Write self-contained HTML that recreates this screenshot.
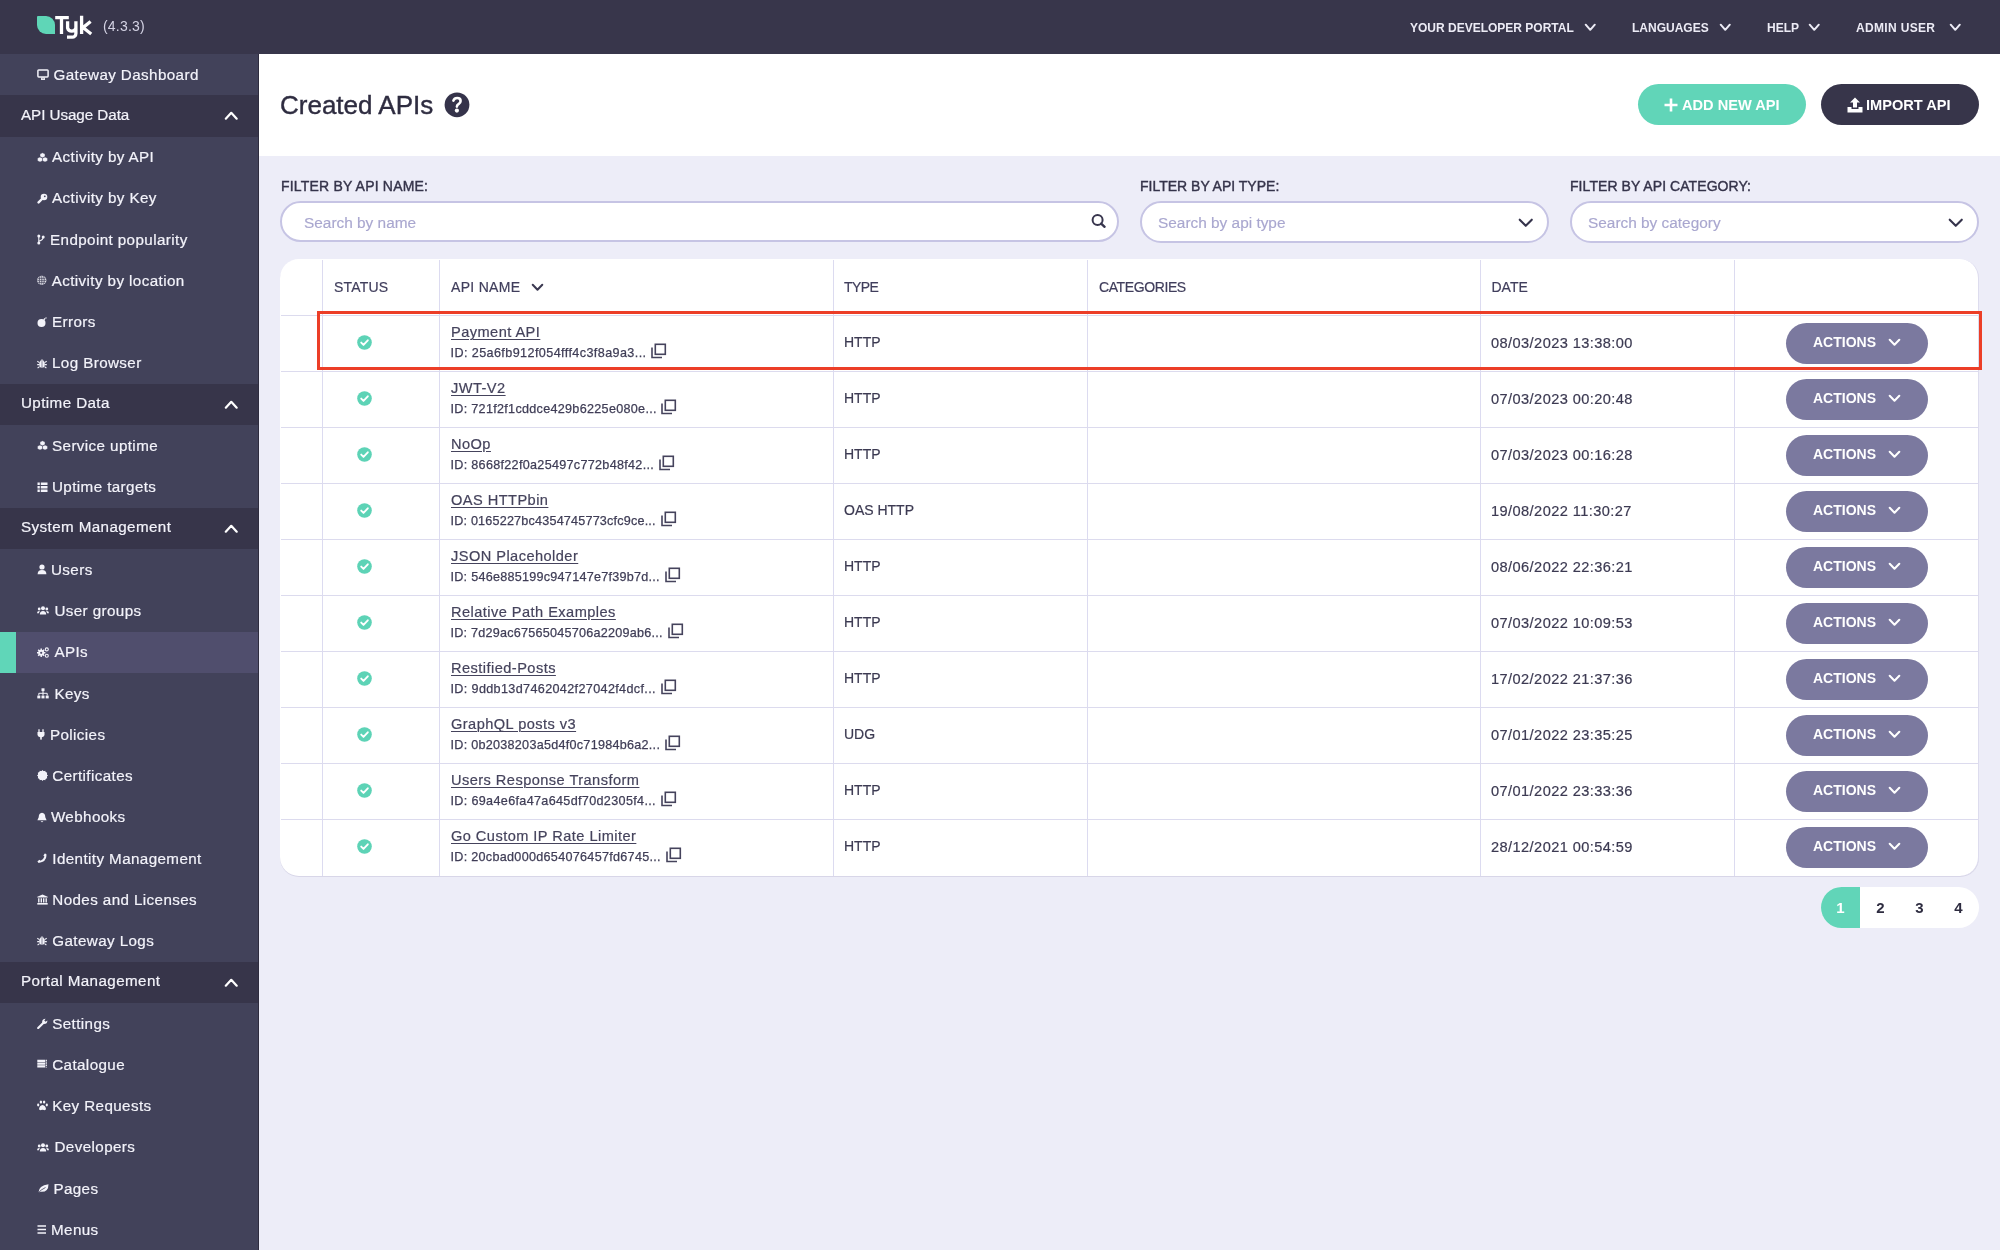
<!DOCTYPE html>
<html><head><meta charset="utf-8"><title>Created APIs</title><style>
*{margin:0;padding:0;box-sizing:border-box}
svg{display:block}
#wrap{position:absolute;left:0;top:0;width:2000px;height:1250px;will-change:transform}
html,body{width:2000px;height:1250px;overflow:hidden;background:#ededf8;font-family:"Liberation Sans",sans-serif}
#top{position:absolute;left:0;top:0;width:2000px;height:54px;background:#38364b}
#side{position:absolute;left:0;top:54px;width:258px;height:1196px;background:#42425a}
#sideb{position:absolute;left:258px;top:54px;width:1px;height:1196px;background:#2e2c3e}
.row{position:absolute;left:0;width:258px;color:#f3f3fa;font-size:15.2px;letter-spacing:0.4px;white-space:nowrap;-webkit-text-stroke:0.2px #f3f3fa}
.row.h{background:#37354a;font-size:15.2px}
.row.act{background:#504e6d}
.row.act:before{content:"";position:absolute;left:0;top:0;width:16px;height:100%;background:#60d6b8}
.row .ic{position:absolute;left:37px;top:15px}
.row .tx{position:absolute;left:53px;top:10.7px;line-height:20px}
.row.h .tx{top:9.4px}
.row.h .tx{left:21px}
.row .chev{position:absolute;left:224px;top:16px}
#hdr{position:absolute;left:259px;top:54px;width:1741px;height:102px;background:#fff}
.nav{position:absolute;top:17.7px;color:#ecebf5;font-weight:bold;font-size:12px;line-height:20px;white-space:nowrap}
.navc{position:absolute;top:23px}
.lbl{position:absolute;top:176px;font-size:14px;line-height:20px;color:#35334a;white-space:nowrap;-webkit-text-stroke:0.4px #35334a}
.inp{position:absolute;top:201px;height:42px;background:#fff;border:2px solid #c6c4e4;border-radius:21px}
.ph{position:absolute;top:10px;font-size:15.4px;line-height:20px;color:#a9a7cf;white-space:nowrap;-webkit-text-stroke:0.15px #a9a7cf}
#tbl{position:absolute;left:279.5px;top:259px;width:1699.5px;height:617px;background:#fff;border-radius:19px;border-right:1px solid #dddcee;box-shadow:0 1px 0 #d8d6e8;overflow:hidden}
#tin{position:absolute;left:1.5px;top:1px;width:1699px;height:617px}
.vl{position:absolute;top:0;width:1px;height:618px;background:#dcdbf0}
.hl{position:absolute;left:0;width:1699px;height:1px;background:#dcdbee}
.th{position:absolute;top:17.2px;font-size:14px;line-height:20px;color:#403e5c;white-space:nowrap;letter-spacing:0.3px;-webkit-text-stroke:0.2px #403e5c}
.nm{position:absolute;font-size:14.6px;line-height:18px;color:#45435c;white-space:nowrap;text-decoration:underline;text-decoration-thickness:1px;text-underline-offset:2px;letter-spacing:0.45px;-webkit-text-stroke:0.2px #45435c}
.id{position:absolute;font-size:12.6px;line-height:16px;color:#3f3d56;white-space:nowrap;letter-spacing:0.4px;-webkit-text-stroke:0.25px #3f3d56}
.cp{position:absolute}
.ty{position:absolute;font-size:14px;line-height:20px;color:#3c3a52;white-space:nowrap;-webkit-text-stroke:0.2px #3c3a52}
.dt{position:absolute;font-size:14.6px;line-height:20px;color:#3c3a52;white-space:nowrap;letter-spacing:0.42px;-webkit-text-stroke:0.2px #3c3a52}
.chk{position:absolute;left:76px}
.btn{position:absolute;left:1505px;width:142px;height:41px;border-radius:21px;background:#7b799f;color:#fff;font-weight:bold;font-size:14px;white-space:nowrap}
.btn span{position:absolute;left:27px;top:9.5px;line-height:20px}
.btn svg{position:absolute;left:102px;top:15px}
.cp{position:absolute}
.pg{position:absolute;left:1821px;top:887px;width:158px;height:41px;border-radius:21px;background:#fff;overflow:hidden}
.pg div{position:absolute;top:0;width:39px;height:41px;font-weight:bold;font-size:15px;line-height:41px;text-align:center;color:#2e2c40}
</style></head><body>
<div id="wrap"><div id="top"></div><div id="side"></div><div id="sideb"></div>
<svg style="position:absolute;left:0;top:0" width="100" height="54" viewBox="0 0 100 54"><path d="M37 17 Q37 16 38 16 H46 A9 9 0 0 1 55 25 V34 H46 A9 9 0 0 1 37 25Z" fill="#5fd6b7"/><g fill="none" stroke="#fff" stroke-width="3.3"><path d="M55.2 17.7 H68.8 M61.5 16.5 V34"/><path d="M67.6 21.2 V28 A4.3 4.3 0 0 0 75.9 28 M75.9 21.2 V33.5 A3.6 3.6 0 0 1 72.3 37.1 H67"/><path d="M81.6 15.8 V34 M90.6 21.5 L83 27.6 L91.2 34"/></g></svg>
<div style="position:absolute;left:103px;top:16px;font-size:14px;line-height:20px;color:#d4d3e4;letter-spacing:0.2px">(4.3.3)</div>
<div class="nav" style="left:1410px">YOUR DEVELOPER PORTAL</div>
<div class="navc" style="left:1584px"><svg width="12.5" height="8.5" viewBox="-1 -1 12.5 8.5"><path d="M0.7 0.7 L5.25 5.8 L9.8 0.7" fill="none" stroke="#ecebf5" stroke-width="2" stroke-linecap="round" stroke-linejoin="round"/></svg></div>
<div class="nav" style="left:1632px">LANGUAGES</div>
<div class="navc" style="left:1719px"><svg width="12.5" height="8.5" viewBox="-1 -1 12.5 8.5"><path d="M0.7 0.7 L5.25 5.8 L9.8 0.7" fill="none" stroke="#ecebf5" stroke-width="2" stroke-linecap="round" stroke-linejoin="round"/></svg></div>
<div class="nav" style="left:1767px">HELP</div>
<div class="navc" style="left:1808px"><svg width="12.5" height="8.5" viewBox="-1 -1 12.5 8.5"><path d="M0.7 0.7 L5.25 5.8 L9.8 0.7" fill="none" stroke="#ecebf5" stroke-width="2" stroke-linecap="round" stroke-linejoin="round"/></svg></div>
<div class="nav" style="left:1856px;letter-spacing:0.33px">ADMIN USER</div>
<div class="navc" style="left:1949px"><svg width="12.5" height="8.5" viewBox="-1 -1 12.5 8.5"><path d="M0.7 0.7 L5.25 5.8 L9.8 0.7" fill="none" stroke="#ecebf5" stroke-width="2" stroke-linecap="round" stroke-linejoin="round"/></svg></div>
<div class="row" style="top:54.00px;height:41.30px"><svg class="ic" width="12" height="11" viewBox="0 0 12 11"><rect x="0.9" y="0.9" width="10.2" height="7" rx="0.8" fill="none" stroke="#f3f3fa" stroke-width="1.5"/><path d="M4 10.2 H8" stroke="#f3f3fa" stroke-width="1.5"/><path d="M5.2 8 L4.6 10 M6.8 8 L7.4 10" stroke="#f3f3fa" stroke-width="1"/></svg><span class="tx" style="left:53.5px">Gateway Dashboard</span></div>
<div class="row h" style="top:95.25px;height:41.30px"><span class="tx" style="letter-spacing:-0.05px">API Usage Data</span><span class="chev"><svg width="14.5" height="9.5" viewBox="-1 -1 14.5 9.5"><path d="M0.8 6.7 L6.25 0.8 L11.7 6.7" fill="none" stroke="#fff" stroke-width="2.2" stroke-linecap="round" stroke-linejoin="round"/></svg></span></div>
<div class="row" style="top:136.51px;height:41.30px"><svg class="ic" width="11" height="11" viewBox="0 0 11 11"><path d="M5.5 0.8 L8 2 L8 4.6 L5.5 5.8 L3 4.6 L3 2Z M3 5 L5.5 6.2 L5.5 8.8 L3 10 L0.5 8.8 L0.5 6.2Z M8 5 L10.5 6.2 L10.5 8.8 L8 10 L5.5 8.8 L5.5 6.2Z" fill="#f3f3fa" stroke="#42425a" stroke-width="0.4"/></svg><span class="tx" style="left:52px">Activity by API</span></div>
<div class="row" style="top:177.77px;height:41.30px"><svg class="ic" width="11" height="11" viewBox="0 0 11 11"><circle cx="7" cy="4" r="3.3" fill="#f3f3fa"/><circle cx="7.8" cy="3.3" r="0.9" fill="#42425a"/><path d="M5.5 5.5 L1.6 9.4" stroke="#f3f3fa" stroke-width="2.4" stroke-linecap="round"/></svg><span class="tx" style="left:52px">Activity by Key</span></div>
<div class="row" style="top:219.02px;height:41.30px"><svg class="ic" width="8" height="11" viewBox="0 0 8 11"><circle cx="1.8" cy="2" r="1.5" fill="#f3f3fa"/><circle cx="1.8" cy="9" r="1.5" fill="#f3f3fa"/><circle cx="6.2" cy="3" r="1.5" fill="#f3f3fa"/><path d="M1.8 2 V9 M6.2 3 Q6.2 6 1.8 7.3" fill="none" stroke="#f3f3fa" stroke-width="1.1"/></svg><span class="tx" style="left:50px">Endpoint popularity</span></div>
<div class="row" style="top:260.27px;height:41.30px"><svg class="ic" width="10" height="11" viewBox="0 0 10 11"><circle cx="4.8" cy="5.3" r="4.6" fill="#f3f3fa"/><path d="M0.2 5.3 H9.4 M4.8 0.7 V9.9 M1 3.3 H8.6 M1 7.3 H8.6 M3 0.9 Q1.5 5.3 3 9.7 M6.6 0.9 Q8.1 5.3 6.6 9.7" fill="none" stroke="#42425a" stroke-width="0.8"/></svg><span class="tx" style="left:51.7px">Activity by location</span></div>
<div class="row" style="top:301.53px;height:41.30px"><svg class="ic" width="10" height="11" viewBox="0 0 10 11"><circle cx="4.5" cy="6" r="4" fill="#f3f3fa"/><path d="M6.8 2.8 L8.2 1.4" stroke="#f3f3fa" stroke-width="1.3"/><circle cx="9" cy="0.9" r="0.7" fill="#f3f3fa"/></svg><span class="tx" style="left:52px">Errors</span></div>
<div class="row" style="top:342.79px;height:41.30px"><svg class="ic" width="10" height="11" viewBox="0 0 10 11"><ellipse cx="5" cy="6.2" rx="2.8" ry="3.6" fill="#f3f3fa"/><path d="M3.2 2.6 Q5 0.6 6.8 2.6Z" fill="#f3f3fa"/><path d="M0.3 3.3 L2.4 4.6 M9.7 3.3 L7.6 4.6 M0.2 6.6 H2.2 M9.8 6.6 H7.8 M0.6 10 L2.5 8.6 M9.4 10 L7.5 8.6" stroke="#f3f3fa" stroke-width="1.1"/><path d="M5 3.2 V9.8" stroke="#42425a" stroke-width="0.6"/></svg><span class="tx" style="left:52px">Log Browser</span></div>
<div class="row h" style="top:384.04px;height:41.30px"><span class="tx">Uptime Data</span><span class="chev"><svg width="14.5" height="9.5" viewBox="-1 -1 14.5 9.5"><path d="M0.8 6.7 L6.25 0.8 L11.7 6.7" fill="none" stroke="#fff" stroke-width="2.2" stroke-linecap="round" stroke-linejoin="round"/></svg></span></div>
<div class="row" style="top:425.30px;height:41.30px"><svg class="ic" width="11" height="11" viewBox="0 0 11 11"><path d="M5.5 0.8 L8 2 L8 4.6 L5.5 5.8 L3 4.6 L3 2Z M3 5 L5.5 6.2 L5.5 8.8 L3 10 L0.5 8.8 L0.5 6.2Z M8 5 L10.5 6.2 L10.5 8.8 L8 10 L5.5 8.8 L5.5 6.2Z" fill="#f3f3fa" stroke="#42425a" stroke-width="0.4"/></svg><span class="tx" style="left:52px">Service uptime</span></div>
<div class="row" style="top:466.55px;height:41.30px"><svg class="ic" width="11" height="11" viewBox="0 0 11 11"><path d="M0.5 1.8 H2.8 M0.5 5.3 H2.8 M0.5 8.8 H2.8 M3.8 1.8 H10.5 M3.8 5.3 H10.5 M3.8 8.8 H10.5" stroke="#f3f3fa" stroke-width="2.4"/></svg><span class="tx" style="left:52px">Uptime targets</span></div>
<div class="row h" style="top:507.81px;height:41.30px"><span class="tx">System Management</span><span class="chev"><svg width="14.5" height="9.5" viewBox="-1 -1 14.5 9.5"><path d="M0.8 6.7 L6.25 0.8 L11.7 6.7" fill="none" stroke="#fff" stroke-width="2.2" stroke-linecap="round" stroke-linejoin="round"/></svg></span></div>
<div class="row" style="top:549.06px;height:41.30px"><svg class="ic" width="10" height="11" viewBox="0 0 10 11"><circle cx="5" cy="3" r="2.6" fill="#f3f3fa"/><path d="M0.6 10.3 Q0.6 6 5 6 Q9.4 6 9.4 10.3Z" fill="#f3f3fa"/></svg><span class="tx" style="left:51px">Users</span></div>
<div class="row" style="top:590.32px;height:41.30px"><svg class="ic" width="12" height="11" viewBox="0 0 12 11"><circle cx="6" cy="3.2" r="2" fill="#f3f3fa"/><path d="M2.8 9.5 Q2.8 6 6 6 Q9.2 6 9.2 9.5Z" fill="#f3f3fa"/><circle cx="2.2" cy="4" r="1.4" fill="#f3f3fa"/><circle cx="9.8" cy="4" r="1.4" fill="#f3f3fa"/><path d="M0 8.3 Q0 6 2.2 6 L2.8 6.3 Q2 7.2 2 8.3Z M12 8.3 Q12 6 9.8 6 L9.2 6.3 Q10 7.2 10 8.3Z" fill="#f3f3fa"/></svg><span class="tx" style="left:54.4px">User groups</span></div>
<div class="row act" style="top:631.57px;height:41.30px"><svg class="ic" width="12" height="11" viewBox="0 0 12 11"><circle cx="4.2" cy="5.8" r="3" fill="#f3f3fa"/><path d="M4.2 1.6 V10 M0 5.8 H8.4 M1.2 2.8 L7.2 8.8 M7.2 2.8 L1.2 8.8" stroke="#f3f3fa" stroke-width="1.5"/><circle cx="4.2" cy="5.8" r="1.1" fill="#504e6d"/><circle cx="9.8" cy="2.4" r="1.5" fill="none" stroke="#f3f3fa" stroke-width="1.1"/><circle cx="9.8" cy="8.8" r="1.5" fill="none" stroke="#f3f3fa" stroke-width="1.1"/></svg><span class="tx" style="left:54.4px">APIs</span></div>
<div class="row" style="top:672.83px;height:41.30px"><svg class="ic" width="12" height="11" viewBox="0 0 12 11"><rect x="4.5" y="0.3" width="3" height="2.8" fill="#f3f3fa"/><rect x="0.3" y="7.6" width="3" height="2.8" fill="#f3f3fa"/><rect x="4.5" y="7.6" width="3" height="2.8" fill="#f3f3fa"/><rect x="8.7" y="7.6" width="3" height="2.8" fill="#f3f3fa"/><path d="M6 3 V7.6 M1.8 7.6 V5.3 H10.2 V7.6" fill="none" stroke="#f3f3fa" stroke-width="1"/></svg><span class="tx" style="left:54.4px">Keys</span></div>
<div class="row" style="top:714.08px;height:41.30px"><svg class="ic" width="8" height="11" viewBox="0 0 8 11"><path d="M2 0.3 V3 M6 0.3 V3" stroke="#f3f3fa" stroke-width="1.3"/><path d="M0.5 3 H7.5 V5.5 Q7.5 8 4 8.4 Q0.5 8 0.5 5.5Z" fill="#f3f3fa"/><rect x="3.2" y="8" width="1.6" height="2.6" fill="#f3f3fa"/></svg><span class="tx" style="left:49.9px">Policies</span></div>
<div class="row" style="top:755.34px;height:41.30px"><svg class="ic" width="11" height="11" viewBox="0 0 11 11"><circle cx="5.5" cy="5.5" r="4.6" fill="#f3f3fa"/><path d="M5.5 0 L6.6 1.2 L8.2 0.8 L8.7 2.3 L10.2 2.8 L9.8 4.4 L11 5.5 L9.8 6.6 L10.2 8.2 L8.7 8.7 L8.2 10.2 L6.6 9.8 L5.5 11 L4.4 9.8 L2.8 10.2 L2.3 8.7 L0.8 8.2 L1.2 6.6 L0 5.5 L1.2 4.4 L0.8 2.8 L2.3 2.3 L2.8 0.8 L4.4 1.2Z" fill="#f3f3fa"/></svg><span class="tx" style="left:52.3px">Certificates</span></div>
<div class="row" style="top:796.59px;height:41.30px"><svg class="ic" width="10" height="11" viewBox="0 0 10 11"><path d="M5 0.8 Q8.3 1.2 8.3 5.2 L9.6 8.3 H0.4 L1.7 5.2 Q1.7 1.2 5 0.8Z" fill="#f3f3fa"/><path d="M3.6 9.2 Q5 11.2 6.4 9.2Z" fill="#f3f3fa"/></svg><span class="tx" style="left:50.9px">Webhooks</span></div>
<div class="row" style="top:837.85px;height:41.30px"><svg class="ic" width="10" height="11" viewBox="0 0 10 11"><path d="M9.3 1 Q10.5 8.5 1.6 10 L0.4 8.3 L2.6 6.8 L3.6 7.8 Q6.6 6.4 7.4 3.5 L6.4 2.6 L7.8 0.5Z" fill="#f3f3fa"/></svg><span class="tx" style="left:52.3px">Identity Management</span></div>
<div class="row" style="top:879.10px;height:41.30px"><svg class="ic" width="11" height="11" viewBox="0 0 11 11"><path d="M5.5 0.5 L10.7 2.8 V3.6 H0.3 V2.8Z" fill="#f3f3fa"/><rect x="0.3" y="9" width="10.4" height="1.6" fill="#f3f3fa"/><path d="M1.8 4.3 V8.6 M4.3 4.3 V8.6 M6.7 4.3 V8.6 M9.2 4.3 V8.6" stroke="#f3f3fa" stroke-width="1.4"/></svg><span class="tx" style="left:52.3px">Nodes and Licenses</span></div>
<div class="row" style="top:920.36px;height:41.30px"><svg class="ic" width="10" height="11" viewBox="0 0 10 11"><ellipse cx="5" cy="6.2" rx="2.8" ry="3.6" fill="#f3f3fa"/><path d="M3.2 2.6 Q5 0.6 6.8 2.6Z" fill="#f3f3fa"/><path d="M0.3 3.3 L2.4 4.6 M9.7 3.3 L7.6 4.6 M0.2 6.6 H2.2 M9.8 6.6 H7.8 M0.6 10 L2.5 8.6 M9.4 10 L7.5 8.6" stroke="#f3f3fa" stroke-width="1.1"/><path d="M5 3.2 V9.8" stroke="#42425a" stroke-width="0.6"/></svg><span class="tx" style="left:52.3px">Gateway Logs</span></div>
<div class="row h" style="top:961.61px;height:41.30px"><span class="tx">Portal Management</span><span class="chev"><svg width="14.5" height="9.5" viewBox="-1 -1 14.5 9.5"><path d="M0.8 6.7 L6.25 0.8 L11.7 6.7" fill="none" stroke="#fff" stroke-width="2.2" stroke-linecap="round" stroke-linejoin="round"/></svg></span></div>
<div class="row" style="top:1002.87px;height:41.30px"><svg class="ic" width="11" height="11" viewBox="0 0 11 11"><path d="M1.2 10 L6 5.2" stroke="#f3f3fa" stroke-width="2.2" stroke-linecap="round"/><path d="M5.1 4.4 Q5 0.8 8.6 0.8 L7.3 2.6 L8.5 3.8 L10.4 2.5 Q10.4 6.2 6.6 6Z" fill="#f3f3fa"/></svg><span class="tx" style="left:52.2px">Settings</span></div>
<div class="row" style="top:1044.12px;height:41.30px"><svg class="ic" width="10" height="11" viewBox="0 0 10 11"><path d="M0.3 1.8 H8.2 M0.3 4.6 H8.2 M0.3 7.4 H8.2" stroke="#f3f3fa" stroke-width="2.2"/><path d="M9.3 0.7 V8.5" stroke="#f3f3fa" stroke-width="1.2" stroke-dasharray="1.2 0.6"/></svg><span class="tx" style="left:52.2px">Catalogue</span></div>
<div class="row" style="top:1085.38px;height:41.30px"><svg class="ic" width="11" height="11" viewBox="0 0 11 11"><path d="M5.5 5 Q8.5 5.5 9 9 Q8.7 10.5 7 10 Q5.5 9.4 4 10 Q2.3 10.5 2 9 Q2.5 5.5 5.5 5Z" fill="#f3f3fa"/><ellipse cx="3.9" cy="2" rx="1.2" ry="1.6" fill="#f3f3fa"/><ellipse cx="7.1" cy="2" rx="1.2" ry="1.6" fill="#f3f3fa"/><ellipse cx="1.2" cy="5" rx="1.1" ry="1.4" fill="#f3f3fa"/><ellipse cx="9.8" cy="5" rx="1.1" ry="1.4" fill="#f3f3fa"/></svg><span class="tx" style="left:52.2px">Key Requests</span></div>
<div class="row" style="top:1126.63px;height:41.30px"><svg class="ic" width="12" height="11" viewBox="0 0 12 11"><circle cx="6" cy="3.2" r="2" fill="#f3f3fa"/><path d="M2.8 9.5 Q2.8 6 6 6 Q9.2 6 9.2 9.5Z" fill="#f3f3fa"/><circle cx="2.2" cy="4" r="1.4" fill="#f3f3fa"/><circle cx="9.8" cy="4" r="1.4" fill="#f3f3fa"/><path d="M0 8.3 Q0 6 2.2 6 L2.8 6.3 Q2 7.2 2 8.3Z M12 8.3 Q12 6 9.8 6 L9.2 6.3 Q10 7.2 10 8.3Z" fill="#f3f3fa"/></svg><span class="tx" style="left:54.5px">Developers</span></div>
<div class="row" style="top:1167.88px;height:41.30px"><svg class="ic" width="12" height="11" viewBox="0 0 12 11"><path d="M1.5 9.5 Q1.5 2.5 11.5 1.2 Q11.5 9.5 3.5 8.8Z" fill="#f3f3fa"/><path d="M0.5 10.5 Q4 6.5 8.5 4.5" fill="none" stroke="#42425a" stroke-width="0.8"/></svg><span class="tx" style="left:53.4px">Pages</span></div>
<div class="row" style="top:1209.14px;height:41.30px"><svg class="ic" width="10" height="11" viewBox="0 0 10 11"><path d="M0.5 2 H9 M0.5 5.5 H9 M0.5 9 H9" stroke="#f3f3fa" stroke-width="1.5"/></svg><span class="tx" style="left:51px">Menus</span></div>
<div id="hdr"></div>
<div style="position:absolute;left:280px;top:87.5px;font-size:26px;line-height:34px;color:#2e2c40;-webkit-text-stroke:0.4px #2e2c40">Created APIs</div>
<svg style="position:absolute;left:444px;top:92px" width="26" height="26" viewBox="0 0 26 26"><circle cx="13" cy="12.8" r="12.4" fill="#35334a"/><path d="M9.4 8.6 Q10.3 6 13.2 6 Q16.6 6 16.6 8.9 Q16.6 10.6 14.8 11.8 Q12.9 13 12.9 14.6" fill="none" stroke="#fff" stroke-width="2.6" stroke-linecap="round"/><circle cx="12.9" cy="18.6" r="2.1" fill="#fff"/></svg>
<div style="position:absolute;left:1638px;top:84px;width:168px;height:41px;border-radius:21px;background:#61d5b8"></div>
<svg style="position:absolute;left:1664px;top:98px" width="14" height="14" viewBox="0 0 14 14"><path d="M7 0.5 V13.5 M0.5 7 H13.5" stroke="#fff" stroke-width="2.6"/></svg>
<div style="position:absolute;left:1682px;top:94.5px;font-size:14.6px;line-height:20px;font-weight:bold;color:#fff">ADD NEW API</div>
<div style="position:absolute;left:1821px;top:84px;width:158px;height:41px;border-radius:21px;background:#37354a"></div>
<svg style="position:absolute;left:1847px;top:97px" width="16" height="16" viewBox="0 0 16 16"><path d="M8 0.5 L13 5.5 H10 V10.5 H6 V5.5 H3Z" fill="#fff"/><path d="M0.5 10 H4.5 V12 H11.5 V10 H15.5 V15.5 H0.5Z" fill="#fff"/></svg>
<div style="position:absolute;left:1866px;top:94.5px;font-size:14.6px;line-height:20px;font-weight:bold;color:#fff">IMPORT API</div>
<div class="lbl" style="left:281px;letter-spacing:0.2px">FILTER BY API NAME:</div>
<div class="lbl" style="left:1140px">FILTER BY API TYPE:</div>
<div class="lbl" style="left:1570px;letter-spacing:0.07px">FILTER BY API CATEGORY:</div>
<div class="inp" style="left:280px;width:839px;height:41px"><div class="ph" style="left:22px">Search by name</div><svg style="position:absolute;left:808px;top:10px" width="17" height="17" viewBox="0 0 17 17"><circle cx="7.6" cy="6.9" r="5" fill="none" stroke="#38364e" stroke-width="2"/><path d="M11.2 10.6 L14.6 13.8" stroke="#38364e" stroke-width="2.4" stroke-linecap="round"/></svg></div>
<div class="inp" style="left:1140px;width:409px"><div class="ph" style="left:16px">Search by api type</div><div style="position:absolute;left:376px;top:15px"><svg width="15.5" height="9.5" viewBox="-1 -1 15.5 9.5"><path d="M0.7 0.7 L6.75 6.8 L12.8 0.7" fill="none" stroke="#35334b" stroke-width="2.1" stroke-linecap="round" stroke-linejoin="round"/></svg></div></div>
<div class="inp" style="left:1570px;width:409px"><div class="ph" style="left:16px">Search by category</div><div style="position:absolute;left:376px;top:15px"><svg width="15.5" height="9.5" viewBox="-1 -1 15.5 9.5"><path d="M0.7 0.7 L6.75 6.8 L12.8 0.7" fill="none" stroke="#35334b" stroke-width="2.1" stroke-linecap="round" stroke-linejoin="round"/></svg></div></div>
<div id="tbl"><div id="tin"><div class="vl" style="left:41px"></div><div class="vl" style="left:158px"></div><div class="vl" style="left:551.5px"></div><div class="vl" style="left:806px"></div><div class="vl" style="left:1198.6px"></div><div class="vl" style="left:1453.4px"></div><div class="hl" style="top:55.30px"></div><div class="hl" style="top:111.30px"></div><div class="hl" style="top:167.30px"></div><div class="hl" style="top:223.30px"></div><div class="hl" style="top:279.30px"></div><div class="hl" style="top:335.30px"></div><div class="hl" style="top:391.30px"></div><div class="hl" style="top:447.30px"></div><div class="hl" style="top:503.30px"></div><div class="hl" style="top:559.30px"></div><div class="th" style="left:53px;letter-spacing:0.2px">STATUS</div><div class="th" style="left:170px;letter-spacing:0.3px">API NAME</div><div class="th" style="left:563px;letter-spacing:-0.6px">TYPE</div><div class="th" style="left:818px;letter-spacing:-0.4px">CATEGORIES</div><div class="th" style="left:1210.5px;letter-spacing:0px">DATE</div><div style="position:absolute;left:250px;top:23px"><svg width="13" height="8.5" viewBox="-1 -1 13 8.5"><path d="M0.7 0.7 L5.5 5.8 L10.3 0.7" fill="none" stroke="#3c3a52" stroke-width="2" stroke-linecap="round" stroke-linejoin="round"/></svg></div><div class="chk" style="top:74.80px"><svg width="15" height="15" viewBox="0 0 15 15"><circle cx="7.5" cy="7.5" r="7.3" fill="#5dd3b6"/><path d="M4.2 7.6 L6.5 9.9 L10.8 5.3" fill="none" stroke="#fff" stroke-width="1.9" stroke-linecap="round" stroke-linejoin="round"/></svg></div><div class="nm" id="nm0" style="left:170px;top:63.30px">Payment API</div><div class="id" id="id0" style="left:169.5px;top:85.10px;letter-spacing:0.406px">ID: 25a6fb912f054fff4c3f8a9a3...</div><div class="cp" style="left:370.0px;top:83.10px"><svg width="16" height="16" viewBox="0 0 16 16"><path d="M1 4.5 V14.5 H11" fill="none" stroke="#45435c" stroke-width="1.6"/><rect x="4.3" y="1.3" width="10" height="10" fill="none" stroke="#45435c" stroke-width="1.6"/></svg></div><div class="ty" style="left:563px;top:72.40px">HTTP</div><div class="dt" style="left:1210px;top:73.10px">08/03/2023 13:38:00</div><div class="btn" style="top:62.80px"><span>ACTIONS</span><svg width="13" height="8.5" viewBox="-1 -1 13 8.5"><path d="M0.7 0.7 L5.5 5.8 L10.3 0.7" fill="none" stroke="#fff" stroke-width="2" stroke-linecap="round" stroke-linejoin="round"/></svg></div><div class="chk" style="top:130.80px"><svg width="15" height="15" viewBox="0 0 15 15"><circle cx="7.5" cy="7.5" r="7.3" fill="#5dd3b6"/><path d="M4.2 7.6 L6.5 9.9 L10.8 5.3" fill="none" stroke="#fff" stroke-width="1.9" stroke-linecap="round" stroke-linejoin="round"/></svg></div><div class="nm" id="nm1" style="left:170px;top:119.30px">JWT-V2</div><div class="id" id="id1" style="left:169.5px;top:141.10px;letter-spacing:0.297px">ID: 721f2f1cddce429b6225e080e...</div><div class="cp" style="left:380.4px;top:139.10px"><svg width="16" height="16" viewBox="0 0 16 16"><path d="M1 4.5 V14.5 H11" fill="none" stroke="#45435c" stroke-width="1.6"/><rect x="4.3" y="1.3" width="10" height="10" fill="none" stroke="#45435c" stroke-width="1.6"/></svg></div><div class="ty" style="left:563px;top:128.40px">HTTP</div><div class="dt" style="left:1210px;top:129.10px">07/03/2023 00:20:48</div><div class="btn" style="top:118.80px"><span>ACTIONS</span><svg width="13" height="8.5" viewBox="-1 -1 13 8.5"><path d="M0.7 0.7 L5.5 5.8 L10.3 0.7" fill="none" stroke="#fff" stroke-width="2" stroke-linecap="round" stroke-linejoin="round"/></svg></div><div class="chk" style="top:186.80px"><svg width="15" height="15" viewBox="0 0 15 15"><circle cx="7.5" cy="7.5" r="7.3" fill="#5dd3b6"/><path d="M4.2 7.6 L6.5 9.9 L10.8 5.3" fill="none" stroke="#fff" stroke-width="1.9" stroke-linecap="round" stroke-linejoin="round"/></svg></div><div class="nm" id="nm2" style="left:170px;top:175.30px">NoOp</div><div class="id" id="id2" style="left:169.5px;top:197.10px;letter-spacing:0.300px">ID: 8668f22f0a25497c772b48f42...</div><div class="cp" style="left:377.7px;top:195.10px"><svg width="16" height="16" viewBox="0 0 16 16"><path d="M1 4.5 V14.5 H11" fill="none" stroke="#45435c" stroke-width="1.6"/><rect x="4.3" y="1.3" width="10" height="10" fill="none" stroke="#45435c" stroke-width="1.6"/></svg></div><div class="ty" style="left:563px;top:184.40px">HTTP</div><div class="dt" style="left:1210px;top:185.10px">07/03/2023 00:16:28</div><div class="btn" style="top:174.80px"><span>ACTIONS</span><svg width="13" height="8.5" viewBox="-1 -1 13 8.5"><path d="M0.7 0.7 L5.5 5.8 L10.3 0.7" fill="none" stroke="#fff" stroke-width="2" stroke-linecap="round" stroke-linejoin="round"/></svg></div><div class="chk" style="top:242.80px"><svg width="15" height="15" viewBox="0 0 15 15"><circle cx="7.5" cy="7.5" r="7.3" fill="#5dd3b6"/><path d="M4.2 7.6 L6.5 9.9 L10.8 5.3" fill="none" stroke="#fff" stroke-width="1.9" stroke-linecap="round" stroke-linejoin="round"/></svg></div><div class="nm" id="nm3" style="left:170px;top:231.30px">OAS HTTPbin</div><div class="id" id="id3" style="left:169.5px;top:253.10px;letter-spacing:0.200px">ID: 0165227bc4354745773cfc9ce...</div><div class="cp" style="left:379.5px;top:251.10px"><svg width="16" height="16" viewBox="0 0 16 16"><path d="M1 4.5 V14.5 H11" fill="none" stroke="#45435c" stroke-width="1.6"/><rect x="4.3" y="1.3" width="10" height="10" fill="none" stroke="#45435c" stroke-width="1.6"/></svg></div><div class="ty" style="left:563px;top:240.40px">OAS HTTP</div><div class="dt" style="left:1210px;top:241.10px">19/08/2022 11:30:27</div><div class="btn" style="top:230.80px"><span>ACTIONS</span><svg width="13" height="8.5" viewBox="-1 -1 13 8.5"><path d="M0.7 0.7 L5.5 5.8 L10.3 0.7" fill="none" stroke="#fff" stroke-width="2" stroke-linecap="round" stroke-linejoin="round"/></svg></div><div class="chk" style="top:298.80px"><svg width="15" height="15" viewBox="0 0 15 15"><circle cx="7.5" cy="7.5" r="7.3" fill="#5dd3b6"/><path d="M4.2 7.6 L6.5 9.9 L10.8 5.3" fill="none" stroke="#fff" stroke-width="1.9" stroke-linecap="round" stroke-linejoin="round"/></svg></div><div class="nm" id="nm4" style="left:170px;top:287.30px">JSON Placeholder</div><div class="id" id="id4" style="left:169.5px;top:309.10px;letter-spacing:0.261px">ID: 546e885199c947147e7f39b7d...</div><div class="cp" style="left:383.5px;top:307.10px"><svg width="16" height="16" viewBox="0 0 16 16"><path d="M1 4.5 V14.5 H11" fill="none" stroke="#45435c" stroke-width="1.6"/><rect x="4.3" y="1.3" width="10" height="10" fill="none" stroke="#45435c" stroke-width="1.6"/></svg></div><div class="ty" style="left:563px;top:296.40px">HTTP</div><div class="dt" style="left:1210px;top:297.10px">08/06/2022 22:36:21</div><div class="btn" style="top:286.80px"><span>ACTIONS</span><svg width="13" height="8.5" viewBox="-1 -1 13 8.5"><path d="M0.7 0.7 L5.5 5.8 L10.3 0.7" fill="none" stroke="#fff" stroke-width="2" stroke-linecap="round" stroke-linejoin="round"/></svg></div><div class="chk" style="top:354.80px"><svg width="15" height="15" viewBox="0 0 15 15"><circle cx="7.5" cy="7.5" r="7.3" fill="#5dd3b6"/><path d="M4.2 7.6 L6.5 9.9 L10.8 5.3" fill="none" stroke="#fff" stroke-width="1.9" stroke-linecap="round" stroke-linejoin="round"/></svg></div><div class="nm" id="nm5" style="left:170px;top:343.30px">Relative Path Examples</div><div class="id" id="id5" style="left:169.5px;top:365.10px;letter-spacing:0.245px">ID: 7d29ac67565045706a2209ab6...</div><div class="cp" style="left:386.5px;top:363.10px"><svg width="16" height="16" viewBox="0 0 16 16"><path d="M1 4.5 V14.5 H11" fill="none" stroke="#45435c" stroke-width="1.6"/><rect x="4.3" y="1.3" width="10" height="10" fill="none" stroke="#45435c" stroke-width="1.6"/></svg></div><div class="ty" style="left:563px;top:352.40px">HTTP</div><div class="dt" style="left:1210px;top:353.10px">07/03/2022 10:09:53</div><div class="btn" style="top:342.80px"><span>ACTIONS</span><svg width="13" height="8.5" viewBox="-1 -1 13 8.5"><path d="M0.7 0.7 L5.5 5.8 L10.3 0.7" fill="none" stroke="#fff" stroke-width="2" stroke-linecap="round" stroke-linejoin="round"/></svg></div><div class="chk" style="top:410.80px"><svg width="15" height="15" viewBox="0 0 15 15"><circle cx="7.5" cy="7.5" r="7.3" fill="#5dd3b6"/><path d="M4.2 7.6 L6.5 9.9 L10.8 5.3" fill="none" stroke="#fff" stroke-width="1.9" stroke-linecap="round" stroke-linejoin="round"/></svg></div><div class="nm" id="nm6" style="left:170px;top:399.30px">Restified-Posts</div><div class="id" id="id6" style="left:169.5px;top:421.10px;letter-spacing:0.358px">ID: 9ddb13d7462042f27042f4dcf...</div><div class="cp" style="left:379.5px;top:419.10px"><svg width="16" height="16" viewBox="0 0 16 16"><path d="M1 4.5 V14.5 H11" fill="none" stroke="#45435c" stroke-width="1.6"/><rect x="4.3" y="1.3" width="10" height="10" fill="none" stroke="#45435c" stroke-width="1.6"/></svg></div><div class="ty" style="left:563px;top:408.40px">HTTP</div><div class="dt" style="left:1210px;top:409.10px">17/02/2022 21:37:36</div><div class="btn" style="top:398.80px"><span>ACTIONS</span><svg width="13" height="8.5" viewBox="-1 -1 13 8.5"><path d="M0.7 0.7 L5.5 5.8 L10.3 0.7" fill="none" stroke="#fff" stroke-width="2" stroke-linecap="round" stroke-linejoin="round"/></svg></div><div class="chk" style="top:466.80px"><svg width="15" height="15" viewBox="0 0 15 15"><circle cx="7.5" cy="7.5" r="7.3" fill="#5dd3b6"/><path d="M4.2 7.6 L6.5 9.9 L10.8 5.3" fill="none" stroke="#fff" stroke-width="1.9" stroke-linecap="round" stroke-linejoin="round"/></svg></div><div class="nm" id="nm7" style="left:170px;top:455.30px">GraphQL posts v3</div><div class="id" id="id7" style="left:169.5px;top:477.10px;letter-spacing:0.271px">ID: 0b2038203a5d4f0c71984b6a2...</div><div class="cp" style="left:383.8px;top:475.10px"><svg width="16" height="16" viewBox="0 0 16 16"><path d="M1 4.5 V14.5 H11" fill="none" stroke="#45435c" stroke-width="1.6"/><rect x="4.3" y="1.3" width="10" height="10" fill="none" stroke="#45435c" stroke-width="1.6"/></svg></div><div class="ty" style="left:563px;top:464.40px">UDG</div><div class="dt" style="left:1210px;top:465.10px">07/01/2022 23:35:25</div><div class="btn" style="top:454.80px"><span>ACTIONS</span><svg width="13" height="8.5" viewBox="-1 -1 13 8.5"><path d="M0.7 0.7 L5.5 5.8 L10.3 0.7" fill="none" stroke="#fff" stroke-width="2" stroke-linecap="round" stroke-linejoin="round"/></svg></div><div class="chk" style="top:522.80px"><svg width="15" height="15" viewBox="0 0 15 15"><circle cx="7.5" cy="7.5" r="7.3" fill="#5dd3b6"/><path d="M4.2 7.6 L6.5 9.9 L10.8 5.3" fill="none" stroke="#fff" stroke-width="1.9" stroke-linecap="round" stroke-linejoin="round"/></svg></div><div class="nm" id="nm8" style="left:170px;top:511.30px">Users Response Transform</div><div class="id" id="id8" style="left:169.5px;top:533.10px;letter-spacing:0.335px">ID: 69a4e6fa47a645df70d2305f4...</div><div class="cp" style="left:379.5px;top:531.10px"><svg width="16" height="16" viewBox="0 0 16 16"><path d="M1 4.5 V14.5 H11" fill="none" stroke="#45435c" stroke-width="1.6"/><rect x="4.3" y="1.3" width="10" height="10" fill="none" stroke="#45435c" stroke-width="1.6"/></svg></div><div class="ty" style="left:563px;top:520.40px">HTTP</div><div class="dt" style="left:1210px;top:521.10px">07/01/2022 23:33:36</div><div class="btn" style="top:510.80px"><span>ACTIONS</span><svg width="13" height="8.5" viewBox="-1 -1 13 8.5"><path d="M0.7 0.7 L5.5 5.8 L10.3 0.7" fill="none" stroke="#fff" stroke-width="2" stroke-linecap="round" stroke-linejoin="round"/></svg></div><div class="chk" style="top:578.80px"><svg width="15" height="15" viewBox="0 0 15 15"><circle cx="7.5" cy="7.5" r="7.3" fill="#5dd3b6"/><path d="M4.2 7.6 L6.5 9.9 L10.8 5.3" fill="none" stroke="#fff" stroke-width="1.9" stroke-linecap="round" stroke-linejoin="round"/></svg></div><div class="nm" id="nm9" style="left:170px;top:567.30px">Go Custom IP Rate Limiter</div><div class="id" id="id9" style="left:169.5px;top:589.10px;letter-spacing:0.294px">ID: 20cbad000d654076457fd6745...</div><div class="cp" style="left:384.5px;top:587.10px"><svg width="16" height="16" viewBox="0 0 16 16"><path d="M1 4.5 V14.5 H11" fill="none" stroke="#45435c" stroke-width="1.6"/><rect x="4.3" y="1.3" width="10" height="10" fill="none" stroke="#45435c" stroke-width="1.6"/></svg></div><div class="ty" style="left:563px;top:576.40px">HTTP</div><div class="dt" style="left:1210px;top:577.10px">28/12/2021 00:54:59</div><div class="btn" style="top:566.80px"><span>ACTIONS</span><svg width="13" height="8.5" viewBox="-1 -1 13 8.5"><path d="M0.7 0.7 L5.5 5.8 L10.3 0.7" fill="none" stroke="#fff" stroke-width="2" stroke-linecap="round" stroke-linejoin="round"/></svg></div></div></div>
<div style="position:absolute;left:317px;top:311px;width:1665px;height:59px;border:3px solid #ec3e27"></div>
<div class="pg"><div style="left:0;background:#61d5b8;color:#fff">1</div><div style="left:40px">2</div><div style="left:79px">3</div><div style="left:118px">4</div></div>
</div></body></html>
